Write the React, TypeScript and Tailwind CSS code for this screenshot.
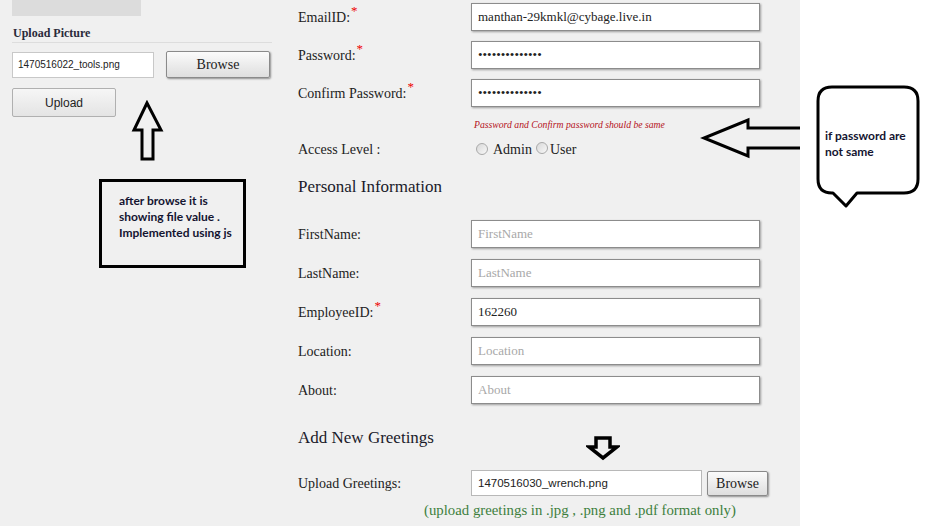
import React from "react";

const serif = "font-['Liberation_Serif','DejaVu_Serif',serif]";
const sans = "font-['Liberation_Sans',Arial,sans-serif]";
const note = "font-['Lato','Liberation_Sans',sans-serif]";

export default function App() {
  return (
    <div className={`relative flex w-[930px] h-[526px] overflow-hidden bg-white text-[#222] ${serif}`}>
      {/* GRAY PAGE AREA */}
      <div className="flex w-[800px] h-full bg-[#f0f0f0]">
        {/* LEFT COLUMN - upload picture */}
        <div className="w-[286px] pl-3 pr-[14px]">
          <div className="w-[129px] h-[16px] bg-[#dcdcdc]" />
          <div className="mt-[10px] pl-[1px] pb-[1px] text-[12px] leading-[15px] font-bold text-[#2a2a3a] border-b border-[#dddddd]">
            Upload Picture
          </div>
          <div className="flex items-center gap-[12px] mt-[8px]">
            <input
              readOnly
              defaultValue="1470516022_tools.png"
              className={`w-[142px] h-[26px] bg-white border border-[#c8c8c8] px-[5px] text-[10px] text-[#222] outline-none ${sans}`}
            />
            <button className="w-[104px] h-[27px] border border-[#8a8a8a] rounded-[2px] bg-gradient-to-b from-[#fbfbfb] to-[#dedede] shadow-[1px_1px_2px_rgba(0,0,0,0.4)] text-[14px] text-[#222]">
              Browse
            </button>
          </div>
          <button className={`mt-[10px] w-[104px] h-[29px] border border-[#b0b0b0] rounded-[2px] bg-gradient-to-b from-[#f6f6f6] to-[#e4e4e4] text-[12px] text-[#222] ${sans}`}>
            Upload
          </button>
        </div>

        {/* FORM COLUMN */}
        <div className="pl-[12px] pt-[3px] flex-1">
          <div className="flex flex-col gap-[10px]">
            <Row label="EmailID:" required value="manthan-29kmkl@cybage.live.in" />
            <Row label="Password:" required value="12345678901234" type="password" />
            <Row label="Confirm Password:" required value="12345678901234" type="password" />
          </div>
          <div className="ml-[176px] mt-[12px] text-[9.7px] italic text-[#b5121b] leading-[12px]">
            Password and Confirm password should be same
          </div>
          <div className="flex items-center mt-[9px] h-[18px] text-[14px]">
            <span className="w-[173px]">Access Level :</span>
            <span className="flex items-center pl-[5px]">
              <Radio />
              <span className="ml-[5px]">Admin</span>
              <span className="ml-[4px]"><Radio /></span>
              <span className="ml-[2px]">User</span>
            </span>
          </div>
          <h2 className="mt-[18px] text-[17px] leading-[22px] text-[#1a1a2a]">Personal Information</h2>
          <div className="flex flex-col gap-[11px] mt-[22px]">
            <Row label="FirstName:" placeholder="FirstName" />
            <Row label="LastName:" placeholder="LastName" />
            <Row label="EmployeeID:" required value="162260" />
            <Row label="Location:" placeholder="Location" />
            <Row label="About:" placeholder="About" />
          </div>
          <h2 className="mt-[23px] text-[17px] leading-[22px] text-[#1a1a2a]">Add New Greetings</h2>
          <div className="flex items-center mt-[21px] h-[26px] text-[14px]">
            <span className="w-[173px]">Upload Greetings:</span>
            <input
              readOnly
              defaultValue="1470516030_wrench.png"
              className={`w-[231px] h-[26px] bg-white border border-[#b8b8b8] px-[6px] text-[11.5px] text-[#222] outline-none ${sans}`}
            />
            <button className="ml-[5px] w-[61px] h-[25px] border border-[#8a8a8a] rounded-[2px] bg-gradient-to-b from-[#fbfbfb] to-[#dedede] shadow-[1px_1px_2px_rgba(0,0,0,0.4)] text-[14px] text-[#222]">
              Browse
            </button>
          </div>
          <div className="ml-[126px] mt-[3px] text-[14.8px] text-[#3d7f3d]">
            (upload greetings in .jpg , .png and .pdf format only)
          </div>
        </div>
      </div>

      {/* ANNOTATIONS */}
      <svg className="absolute left-[130px] top-[100px]" width="36" height="64" viewBox="0 0 36 64">
        <polygon points="17,3 4,30 12,30 12,59 23,59 23,30 31,30" fill="none" stroke="#000" strokeWidth="3" strokeLinejoin="miter" />
      </svg>
      <div className={`absolute left-[99px] top-[179px] w-[147px] h-[89px] border-[3px] border-black pl-[17px] pt-[11px] text-[12px] leading-[16px] font-bold text-[#141430] ${note}`}>
        after browse it is
        <br />
        showing file value .
        <br />
        Implemented using js
      </div>

      <svg className="absolute left-[700px] top-[115px]" width="100" height="46" viewBox="0 0 100 46">
        <polyline points="100,13 48,13 48,5 4,23 48,41 48,33 100,33" fill="none" stroke="#000" strokeWidth="3" />
      </svg>

      <div className="absolute left-[815px] top-[84px] w-[108px] h-[126px]">
        <svg className="absolute inset-0" width="108" height="126" viewBox="0 0 108 126">
          <path
            d="M17 3 H89 Q103 3 103 17 V95 Q103 109 89 109 H42 L31 122 L18 109 H17 Q3 109 3 95 V17 Q3 3 17 3 Z"
            fill="#fff"
            stroke="#000"
            strokeWidth="3"
            strokeLinejoin="round"
          />
        </svg>
        <div className={`absolute left-[10px] top-[44px] text-[12px] leading-[16px] font-bold text-[#141430] ${note}`}>
          if password are
          <br />
          not same
        </div>
      </div>

      <svg className="absolute left-[586px] top-[435px]" width="34" height="27" viewBox="0 0 34 27">
        <polygon points="10,3 24,3 24,12 31,12 17,23 3,12 10,12" fill="none" stroke="#000" strokeWidth="3.5" />
      </svg>
    </div>
  );
}

function Row({
  label,
  required,
  value,
  placeholder,
  type = "text",
}: {
  label: string;
  required?: boolean;
  value?: string;
  placeholder?: string;
  type?: string;
}) {
  return (
    <div className="flex items-center h-[28px] text-[14px]">
      <span className="w-[173px]">
        {label}
        {required && <sup className="text-[#e00] text-[13px] ml-[1px]">*</sup>}
      </span>
      <input
        readOnly
        type={type}
        defaultValue={value}
        placeholder={placeholder}
        className="w-[289px] h-[28px] bg-white border border-[#8c8c8c] shadow-[1px_1px_2px_rgba(0,0,0,0.35)] px-[6px] text-[13px] text-[#222] placeholder:text-[#a8a8a8] outline-none"
      />
    </div>
  );
}

function Radio() {
  return (
    <span className="inline-block w-[12px] h-[12px] rounded-full border border-[#a9a9a9] bg-gradient-to-br from-[#d8d8d8] to-[#f8f8f8]" />
  );
}
